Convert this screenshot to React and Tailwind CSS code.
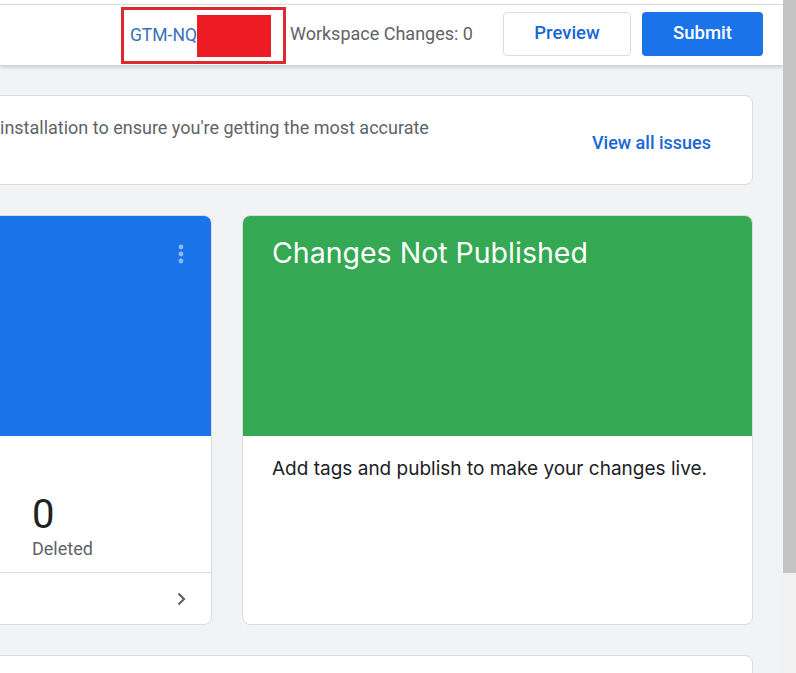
import React from 'react';

const roboto = { fontFamily: 'Roboto, "Liberation Sans", sans-serif' };
const gsans = { fontFamily: 'Inter, Roboto, sans-serif' };

const Kebab = () => (
  <svg width="6" height="20" viewBox="0 0 6 20" className="opacity-60">
    <circle cx="3" cy="3" r="2.4" fill="#dbe8fc" />
    <circle cx="3" cy="10" r="2.4" fill="#dbe8fc" />
    <circle cx="3" cy="17" r="2.4" fill="#dbe8fc" />
  </svg>
);

const Chevron = () => (
  <svg width="10" height="14" viewBox="0 0 10 14">
    <path d="M2.5 1.5 L8 7 L2.5 12.5" fill="none" stroke="#5f6368" strokeWidth="2.2" />
  </svg>
);

const Header = () => (
  <div className="bg-white">
    <div className="h-[4px]" />
    <div
      className="h-[61px] border-t border-[#dadce0] flex items-start justify-end pr-[20px] relative z-10 shadow-[0_2px_4px_rgba(0,0,0,0.18)]"
      style={roboto}
    >
      <div className="mt-[2px] h-[57px] w-[165px] border-[3px] border-[#dc2a32] flex items-center pl-[6px]">
        <span className="text-[17.5px] text-[#3b6fb8]">GTM-NQ</span>
        <div className="w-[74px] h-[42px] bg-[#ed1c24]" />
      </div>
      <span className="ml-[4px] mt-[7px] h-[44px] leading-[44px] text-[18px] text-[#5f6368]">
        Workspace Changes: 0
      </span>
      <button className="ml-[30px] mt-[7px] w-[128px] h-[44px] rounded-[4px] border border-[#dadce0] bg-white text-[18.5px] font-medium text-[#1967d2]">
        Preview
      </button>
      <button className="ml-[11px] mt-[7px] w-[121px] h-[44px] rounded-[4px] bg-[#1a73e8] text-[18.5px] font-medium text-white">
        Submit
      </button>
    </div>
  </div>
);

export default function App() {
  return (
    <div className="w-[796px] h-[673px] overflow-hidden flex bg-[#f1f3f4]">
      <div className="w-[783px] shrink-0 flex flex-col overflow-hidden">
        <Header />

        <div className="ml-[-299px] w-[1052px] pt-[30px] flex flex-col gap-[30px]">
          {/* Issues banner */}
          <div className="h-[90px] bg-white rounded-[8px] border border-[#dadce0] flex items-center justify-between pl-[298px] pr-[33px]" style={roboto}>
            <div className="flex flex-col text-[18px] leading-[24px] text-[#5f6368] mt-[-1px]">
              <span>installation to ensure you're getting the most accurate</span>
              <span className="h-[24px]" />
            </div>
            <button className="px-[8px] h-[36px] text-[18px] font-medium text-[#1967d2] mt-[5px]">
              View all issues
            </button>
          </div>

          {/* Cards */}
          <div className="grid grid-cols-2 gap-[30px]">
            <div className="h-[410px] bg-white rounded-[8px] border border-[#dadce0] overflow-hidden flex flex-col">
              <div className="h-[220px] bg-[#1a73e8] flex justify-end pr-[27px] pt-[28px]">
                <Kebab />
              </div>
              <div className="flex-1 flex flex-col pl-[330px] pt-[57px]" style={roboto}>
                <span className="text-[40px] leading-[44px] text-[#202124]">0</span>
                <span className="text-[18px] leading-[24px] text-[#5f6368]">Deleted</span>
              </div>
              <div className="h-[52px] border-t border-[#dadce0] flex items-center justify-end pr-[25px]">
                <Chevron />
              </div>
            </div>

            <div className="h-[410px] bg-white rounded-[8px] border border-[#dadce0] overflow-hidden flex flex-col">
              <div className="h-[220px] bg-[#34a853] px-[29px] pt-[18px]">
                <h2 className="text-[28.5px] leading-[38px] text-white" style={gsans}>
                  Changes Not Published
                </h2>
              </div>
              <div className="px-[29px] pt-[21px]">
                <p className="text-[19px] leading-[24px] text-[#202124]" style={gsans}>
                  Add tags and publish to make your changes live.
                </p>
              </div>
            </div>
          </div>

          <div className="h-[120px] bg-white rounded-[8px] border border-[#dadce0]" />
        </div>
      </div>

      {/* scrollbar */}
      <div className="w-[13px] shrink-0 flex flex-col bg-[#f1f1f1]">
        <div className="h-[573px] bg-[#c4c4c4]" />
      </div>
    </div>
  );
}
